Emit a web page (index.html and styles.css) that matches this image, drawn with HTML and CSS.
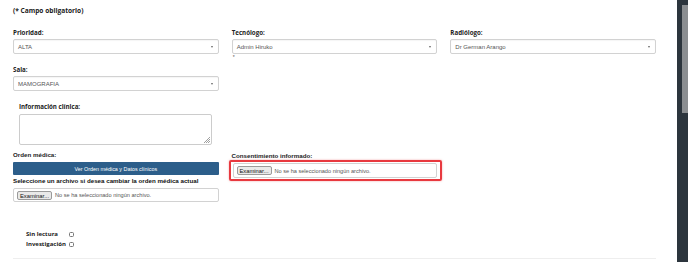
FILE: index.html
```html
<!DOCTYPE html>
<html lang="es">
<head>
<meta charset="utf-8">
<link rel="stylesheet" href="styles.css">
</head>
<body>
<div class="page">
  <div class="main">
    <div class="required">(* Campo obligatorio)</div>

    <div class="grid row1">
      <div class="field">
        <div class="label">Prioridad:</div>
        <div class="select"><span>ALTA</span><i class="caret"></i></div>
      </div>
      <div class="field">
        <div class="label">Tecnólogo:</div>
        <div class="select"><span>Admin Hiruko</span><i class="caret"></i></div>
        <div class="asterisk">*</div>
      </div>
      <div class="field">
        <div class="label">Radiólogo:</div>
        <div class="select"><span>Dr German Arango</span><i class="caret"></i></div>
      </div>
    </div>

    <div class="grid row2">
      <div class="field">
        <div class="label">Sala:</div>
        <div class="select"><span>MAMOGRAFIA</span><i class="caret"></i></div>
      </div>
    </div>

    <div class="grid row-info">
      <div class="info">
        <div class="label">Información clínica:</div>
        <div class="textarea">
          <svg class="grip" width="6" height="6" viewBox="0 0 6 6"><path d="M6 0L0 6M6 2L2 6M6 4L4 6" stroke="#888" stroke-width="0.8"/></svg>
        </div>
      </div>
    </div>

    <div class="grid row3">
      <div class="field">
        <div class="label alt">Orden médica:</div>
        <div class="btn-primary">Ver Orden médica y Datos clínicos</div>
        <div class="label alt change">Seleccione un archivo si desea cambiar la orden médica actual</div>
        <div class="file"><span class="file-btn">Examinar...</span><span class="file-text">No se ha seleccionado ningún archivo.</span></div>
      </div>
      <div class="field">
        <div class="label alt consent">Consentimiento informado:</div>
        <div class="highlight">
          <div class="file tall"><span class="file-btn">Examinar...</span><span class="file-text">No se ha seleccionado ningún archivo.</span></div>
        </div>
      </div>
    </div>

    <div class="checks">
      <div class="check-row"><span class="check-label">Sin lectura</span><span class="checkbox"></span></div>
      <div class="check-row"><span class="check-label">Investigación</span><span class="checkbox"></span></div>
    </div>

    <div class="rule"></div>
  </div>
  <div class="scrollbar"><div class="thumb"></div></div>
</div>
</body>
</html>
```

FILE: styles.css
```css
* { box-sizing: border-box; }
html, body { margin: 0; padding: 0; background: #fff; }
body { font-family: "Liberation Sans", Arial, sans-serif; color: #333; }

.page { display: flex; width: 688px; height: 262px; overflow: hidden; }
.main { width: 677px; padding: 7px 21px 0 13px; }

.required { font-family: "Open Sans", sans-serif; font-weight: 700; font-size: 6.6px; line-height: 8px; color: #222; }

.grid { display: grid; grid-template-columns: repeat(3, 1fr); column-gap: 13px; }
.row1 { margin-top: 14px; height: 31px; }
.row2 { margin-top: 6px; }
.row-info { margin-top: 12px; }
.row3 { margin-top: 6px; }

.label { font-family: "Open Sans", sans-serif; font-weight: 700; font-size: 6.2px; line-height: 8px; color: #222; margin-bottom: 2px; white-space: nowrap; }
.label.alt { font-family: "Liberation Sans", Arial, sans-serif; }
.label.change { margin-top: 2px; margin-bottom: 3px; color: #111; }
.label.consent { margin-top: 1px; margin-bottom: 2px; }

.select { position: relative; height: 15px; border: 1px solid #d2d2d2; border-radius: 2px; background: #fff; display: flex; align-items: center; padding-left: 4px; font-size: 6px; color: #555; box-shadow: inset 0 1px 1px rgba(0,0,0,0.04); }
.caret { position: absolute; right: 5px; top: 6px; width: 0; height: 0; border-left: 1.5px solid transparent; border-right: 1.5px solid transparent; border-top: 2px solid #666; }
.asterisk { font-size: 5px; line-height: 6px; color: #555; padding-left: 1px; }

.info { padding-left: 6px; width: 199px; }
.textarea { position: relative; width: 193px; height: 31px; border: 1px solid #ccc; border-radius: 2px; margin-top: 3px; }
.grip { position: absolute; right: 1px; bottom: 1px; }

.btn-primary { height: 13px; margin-top: 3px; background: #2c5e8a; color: #fff; font-size: 5.4px; display: flex; align-items: center; justify-content: center; border-radius: 1px; }

.file { height: 14px; border: 1px solid #d2d2d2; border-radius: 2px; display: flex; align-items: center; padding-left: 3px; font-size: 5.6px; color: #555; }
.file.tall { height: 15px; }
.file-btn { height: 9px; line-height: 8px; padding: 0 2px; border: 1px solid #9a9a9a; border-radius: 2px; background: #e9e9e9; color: #111; margin-right: 3px; font-size: 5.8px; }
.highlight { margin: 0 -4px 0 -3px; padding: 1px 3px 1px 2px; border: 2px solid #e8393f; border-radius: 2px; box-shadow: 0 0 2px rgba(232,57,63,0.5); margin-top: -2px; width: 213px; }

.checks { margin-top: 27px; padding-left: 13px; }
.check-row { display: flex; align-items: center; height: 10px; }
.check-label { width: 43px; font-family: "Open Sans", sans-serif; font-weight: 700; font-size: 6px; color: #222; }
.checkbox { width: 5px; height: 5px; border: 0.7px solid #777; border-radius: 1.5px; background: #fff; }

.rule { margin-top: 9px; height: 1px; background: #eee; width: 643px; }

.scrollbar { position: relative; width: 11px; height: 262px; background: #2c353d; }
.thumb { position: absolute; left: 5px; top: 5px; width: 6px; height: 108px; background: #8b8e91; }
```
